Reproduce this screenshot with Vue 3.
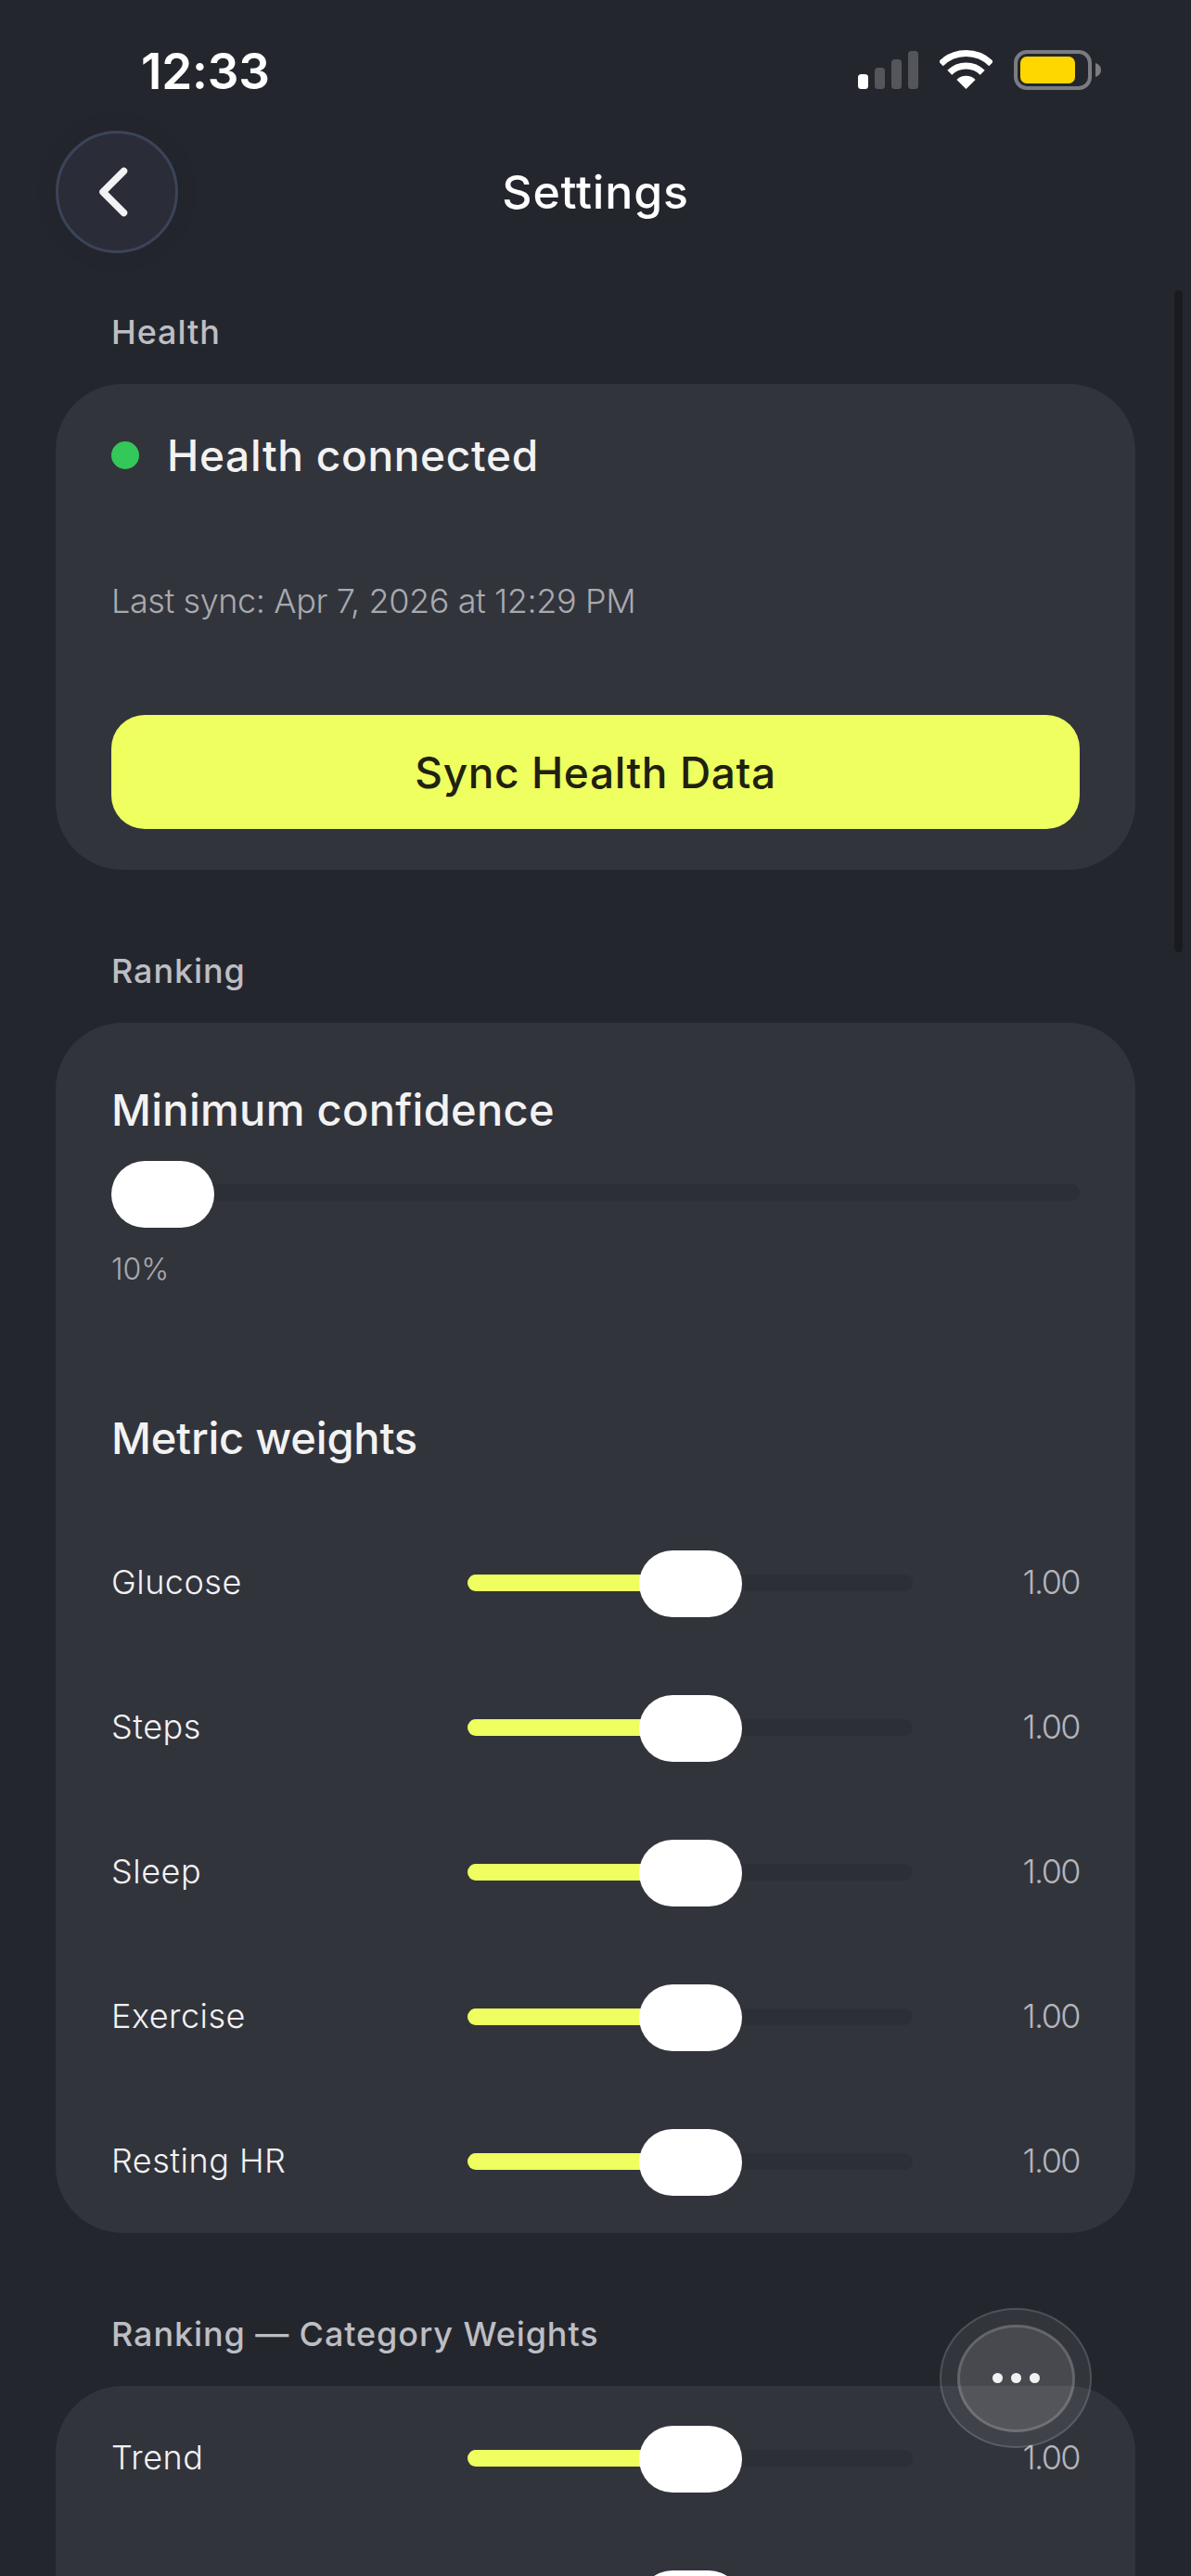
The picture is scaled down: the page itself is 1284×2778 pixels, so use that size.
<script setup>
const metricWeights = [
  { label: 'Glucose', value: 1 },
  { label: 'Steps', value: 1 },
  { label: 'Sleep', value: 1 },
  { label: 'Exercise', value: 1 },
  { label: 'Resting HR', value: 1 }
]

// second row is only peeking in at the bottom of the screen, just its thumb shows
const categoryWeights = [
  { label: 'Trend', value: 1 },
  { label: '', value: 1 }
]

// thumb travels over track width minus thumb width
function thumbLeft(value) {
  return (value / 2) * 369 + 'px'
}
function fillWidth(value) {
  return (value / 2) * 369 + 55 + 'px'
}
</script>

<template>
  <div class="page">
    <div class="status-bar">
      <span class="time">12:33</span>
      <div class="status-icons">
        <svg class="signal" viewBox="0 0 65 41" width="65" height="41">
          <rect x="0" y="25" width="11" height="16" rx="3.5" fill="#fff" />
          <rect x="18" y="18" width="11" height="23" rx="3.5" fill="#55565c" />
          <rect x="36" y="9" width="11" height="32" rx="3.5" fill="#55565c" />
          <rect x="54" y="0" width="11" height="41" rx="3.5" fill="#55565c" />
        </svg>
        <svg class="wifi" viewBox="0 0 57 42" width="57" height="42">
          <path d="M1.3 14.8A38.5 38.5 0 0 1 55.7 14.8" fill="none" stroke="#fff" stroke-width="7" />
          <path d="M10.8 24.3A25 25 0 0 1 46.2 24.3" fill="none" stroke="#fff" stroke-width="7" />
          <path d="M28.5 42L18.4 31.9A14.3 14.3 0 0 1 38.6 31.9Z" fill="#fff" />
        </svg>
        <svg class="battery" viewBox="0 0 94 43" width="94" height="43">
          <rect x="2" y="2" width="80" height="39" rx="12" fill="none" stroke="#7b7c82" stroke-width="4" />
          <rect x="7" y="7" width="59" height="29" rx="7" fill="#ffd700" />
          <path d="M88 14C91.5 15 94 18 94 21.500C94 25 91.500 28 88 29Z" fill="#7b7c82" />
        </svg>
      </div>
    </div>

    <header class="top-bar">
      <button class="back-btn">
        <svg viewBox="0 0 40 60" width="40" height="60">
          <path d="M27.500 7.500L5 30L27.500 52.500" fill="none" stroke="#f2f2f2" stroke-width="7.500" stroke-linecap="round" stroke-linejoin="round" />
        </svg>
      </button>
      <h1 class="title">Settings</h1>
    </header>

    <main class="content">
      <h2 class="section-label first">Health</h2>
      <section class="card health-card">
        <div class="connected">
          <span class="dot"></span>
          <span class="connected-text">Health connected</span>
        </div>
        <p class="last-sync">Last sync: Apr 7, 2026 at 12:29 PM</p>
        <button class="sync-btn">Sync Health Data</button>
      </section>

      <h2 class="section-label">Ranking</h2>
      <section class="card ranking-card">
        <h3 class="card-title">Minimum confidence</h3>
        <div class="slider wide">
          <div class="track"></div>
          <div class="thumb"></div>
        </div>
        <p class="percent">10%</p>

        <h3 class="card-title metric-title">Metric weights</h3>
        <div class="rows">
          <div v-for="row in metricWeights" :key="row.label" class="row">
            <span class="row-label">{{ row.label }}</span>
            <div class="slider">
              <div class="track"></div>
              <div class="fill" :style="{ width: fillWidth(row.value) }"></div>
              <div class="thumb" :style="{ left: thumbLeft(row.value) }"></div>
            </div>
            <span class="row-value">{{ row.value.toFixed(2) }}</span>
          </div>
        </div>
      </section>

      <h2 class="section-label">Ranking — Category Weights</h2>
      <section class="card category-card">
        <div class="rows">
          <div v-for="(row, i) in categoryWeights" :key="i" class="row">
            <span class="row-label">{{ row.label }}</span>
            <div class="slider">
              <div class="track"></div>
              <div class="fill" :style="{ width: fillWidth(row.value) }"></div>
              <div class="thumb" :style="{ left: thumbLeft(row.value) }"></div>
            </div>
            <span v-if="row.label" class="row-value">{{ row.value.toFixed(2) }}</span>
          </div>
        </div>
      </section>
    </main>

    <div class="scrollbar"></div>

    <button class="fab">
      <span class="fab-inner">
        <i></i><i></i><i></i>
      </span>
    </button>
  </div>
</template>

<style>
html, body {
  margin: 0;
  background: #24262e;
}
</style>

<style scoped>
.page {
  position: relative;
  width: 1284px;
  height: 2778px;
  overflow: hidden;
  background: #24262e;
  color: #fff;
  font-family: Inter, "Liberation Sans", sans-serif;
}

.status-bar {
  height: 141px;
  box-sizing: border-box;
  display: flex;
  justify-content: space-between;
  padding: 54px 97px 0 152px;
}

.time {
  font-size: 53px;
  font-weight: 600;
  line-height: 46px;
  letter-spacing: -0.2px;
}

.status-icons {
  display: flex;
  align-items: flex-start;
  gap: 23px;
}

.signal {
  margin-top: 1px;
}

.top-bar {
  position: relative;
  height: 132px;
  padding-left: 60px;
  display: flex;
  align-items: center;
}

.back-btn {
  width: 132px;
  height: 132px;
  padding: 0;
  border-radius: 50%;
  border: 3px solid #3b4459;
  background: #2a2d38;
  display: flex;
  align-items: center;
  justify-content: center;
  box-shadow: 0 0 30px rgba(0, 0, 0, 0.06);
}

.title {
  position: absolute;
  left: 0;
  right: 0;
  margin: 0;
  text-align: center;
  font-size: 50px;
  font-weight: 500;
  line-height: 60px;
  letter-spacing: 0.8px;
}

.content {
  padding: 0 60px;
}

.section-label {
  margin: 81px 0 28px;
  padding-left: 60px;
  font-size: 36px;
  font-weight: 500;
  line-height: 56px;
  letter-spacing: 0.9px;
  color: #bdbec3;
}

.section-label.first {
  margin-top: 57px;
}

.card {
  background: #32343c;
  border-radius: 72px;
  padding: 0 60px;
}

.health-card {
  padding-top: 53px;
  padding-bottom: 44px;
}

.connected {
  display: flex;
  align-items: center;
  gap: 30px;
  height: 48px;
}

.dot {
  width: 30px;
  height: 30px;
  border-radius: 50%;
  background: #34c759;
}

.connected-text {
  font-size: 46px;
  font-weight: 500;
  letter-spacing: 0.7px;
  color: #f2f2f2;
}

.last-sync {
  margin: 105px 0 95px;
  font-size: 36px;
  font-weight: 300;
  line-height: 56px;
  letter-spacing: -0.4px;
  color: #a9aaaf;
}

.sync-btn {
  display: block;
  width: 100%;
  height: 123px;
  border: none;
  border-radius: 36px;
  background: #eeff5f;
  color: #20210f;
  font-family: inherit;
  font-size: 46px;
  font-weight: 500;
  letter-spacing: 0.6px;
}

.ranking-card {
  padding-top: 64px;
  padding-bottom: 40px;
}

.card-title {
  margin: 0;
  font-size: 47px;
  font-weight: 500;
  line-height: 60px;
  letter-spacing: 0.3px;
  color: #f2f2f2;
}

.metric-title {
  margin-top: 128px;
  letter-spacing: -0.2px;
}

.slider {
  position: relative;
  width: 480px;
  height: 72px;
  flex-shrink: 0;
}

.slider.wide {
  width: 100%;
  margin-top: 25px;
}

.track {
  position: absolute;
  left: 0;
  right: 0;
  top: 26px;
  height: 18px;
  border-radius: 9px;
  background: #2d2f36;
}

.slider.wide .track {
  top: 25px;
}

.fill {
  position: absolute;
  left: 0;
  top: 26px;
  height: 18px;
  border-radius: 9px;
  background: #eeff5f;
}

.thumb {
  position: absolute;
  left: 0;
  top: 0;
  width: 111px;
  height: 72px;
  border-radius: 36px;
  background: #fff;
}

.percent {
  margin: 21px 0 0;
  font-size: 32px;
  font-weight: 300;
  line-height: 48px;
  color: #a9aaaf;
}

.rows {
  display: flex;
  flex-direction: column;
  gap: 84px;
}

.ranking-card .rows {
  margin-top: 91px;
}

.category-card {
  padding-top: 43px;
  padding-bottom: 60px;
}

.row {
  display: flex;
  align-items: center;
  height: 72px;
}

.row-label {
  width: 384px;
  flex-shrink: 0;
  margin-bottom: 4px;
  font-size: 36px;
  font-weight: 300;
  letter-spacing: 0.5px;
  color: #f2f2f2;
}

.row-value {
  flex: 1;
  margin-bottom: 4px;
  text-align: right;
  font-size: 36px;
  font-weight: 300;
  letter-spacing: -1.6px;
  color: #b4b5ba;
}

.scrollbar {
  position: absolute;
  left: 1266px;
  top: 313px;
  width: 9px;
  height: 714px;
  border-radius: 5px;
  background: #1a1b20;
}

.fab {
  position: absolute;
  left: 1013px;
  top: 2489px;
  width: 164px;
  height: 151px;
  padding: 0;
  box-sizing: border-box;
  border-radius: 50%;
  border: 2px solid rgba(255, 255, 255, 0.14);
  background: rgba(255, 255, 255, 0.07);
  display: flex;
  align-items: center;
  justify-content: center;
}

.fab-inner {
  width: 127px;
  height: 116px;
  box-sizing: border-box;
  border-radius: 50%;
  border: 3px solid rgba(255, 255, 255, 0.16);
  background: rgba(255, 255, 255, 0.1);
  display: flex;
  align-items: center;
  justify-content: center;
  gap: 9px;
}

.fab-inner i {
  width: 11px;
  height: 11px;
  border-radius: 50%;
  background: #f2f2f2;
}
</style>
